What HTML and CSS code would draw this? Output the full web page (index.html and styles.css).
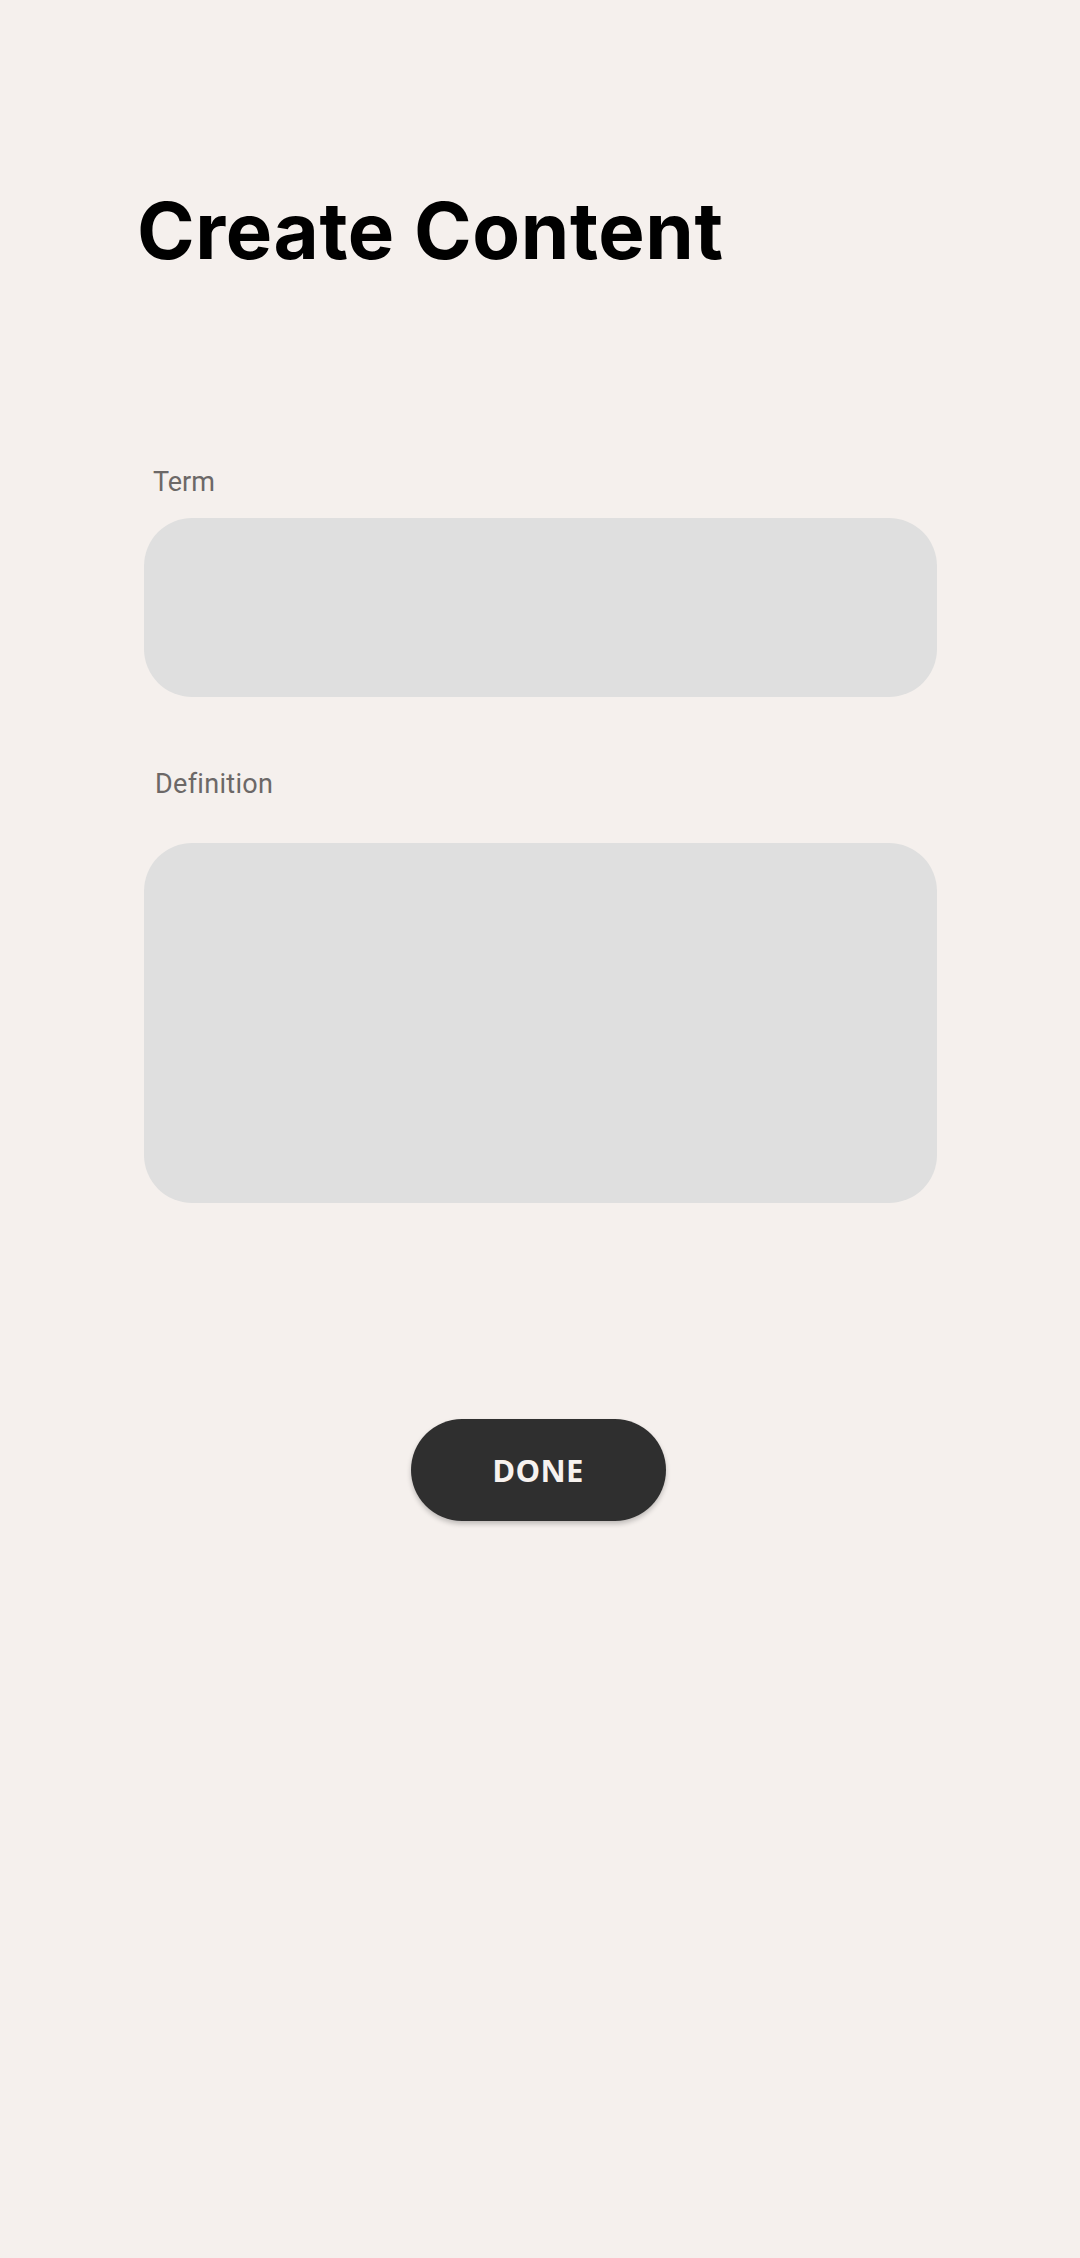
FILE: index.html
```html
<!DOCTYPE html>
<html lang="en">
<head>
<meta charset="utf-8">
<title>Create Content</title>
<link rel="stylesheet" href="styles.css">
</head>
<body>
<main class="page">
  <h1 class="title">Create Content</h1>
  <form class="form">
    <label class="field-label field-label--term" for="term">Term</label>
    <div class="input input--term" id="term"></div>
    <label class="field-label field-label--def" for="definition">Definition</label>
    <div class="input input--def" id="definition"></div>
    <div class="actions">
      <button type="button" class="done-btn">DONE</button>
    </div>
  </form>
</main>
</body>
</html>
```
FILE: styles.css
```css
html, body {
  margin: 0;
  padding: 0;
  background: #f5f0ed;
}
body {
  width: 1080px;
  min-height: 2258px;
}
.page {
  padding: 192px 143px 0 144px;
  box-sizing: border-box;
  width: 1080px;
}
.title {
  margin: 0 0 0 -7px;
  font-family: Inter, "Liberation Sans", sans-serif;
  font-weight: 700;
  font-size: 78px;
  line-height: 78px;
  color: #000;
  letter-spacing: 0.6px;
}
.form {
  display: flex;
  flex-direction: column;
}
.field-label {
  display: block;
  font-family: Roboto, "Liberation Sans", sans-serif;
  font-size: 27px;
  line-height: 27px;
  color: #6c6867;
  padding-left: 9px;
}
.field-label--term {
  margin-top: 199px;
}
.field-label--def {
  margin-top: 74px;
  padding-left: 11px;
  letter-spacing: 0.3px;
}
.input {
  background: #dfdfdf;
  border-radius: 48px;
  width: 793px;
}
.input--term {
  margin-top: 22px;
  height: 179px;
}
.input--def {
  margin-top: 45px;
  height: 360px;
}
.actions {
  display: flex;
  justify-content: center;
  margin-top: 216px;
}
.done-btn {
  width: 255px;
  height: 102px;
  border: none;
  border-radius: 51px;
  background: #2f2f2f;
  color: #f7f2ef;
  font-family: "Open Sans", "Noto Sans", sans-serif;
  font-weight: 700;
  font-size: 31px;
  letter-spacing: 0.3px;
  box-shadow: 0 3px 5px rgba(0, 0, 0, 0.22);
  padding: 0;
  margin-left: -5px;
}
```
